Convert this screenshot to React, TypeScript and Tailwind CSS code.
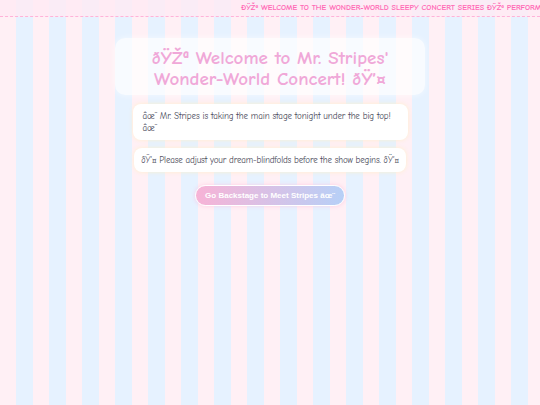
export default function App() {
  return (
    <div
      className="min-h-[405px] w-full bg-[repeating-linear-gradient(90deg,#fff0f5_0px,#fff0f5_16.5px,#e6f2ff_16.5px,#e6f2ff_33px)] font-['Comic_Sans_MS','Comic_Neue',cursive] overflow-hidden"
    >
      <div className="h-[17px] bg-[#ffeaf4]/80 border-b border-dashed border-[#ffb3d9] overflow-hidden whitespace-nowrap">
        <div className="pl-[241px] pt-[3px] text-[8px] leading-[10px] font-bold text-[#ff69b4] uppercase tracking-[0px]">
          ðŸŽª WELCOME TO THE WONDER-WORLD SLEEPY CONCERT SERIES ðŸŽª PERFORMING TONIGHT: MR. STRIPES AND THE DREAMY BAND ðŸŽª
        </div>
      </div>

      <div className="flex flex-col items-center pt-[21px]">
        <div className="w-[310px] rounded-[10px] bg-white/70 px-5 pt-[10px] pb-[5px] text-center shadow-[0_0_6px_rgba(255,255,255,0.6)]">
          <h1 className="text-[19px] leading-[21px] font-bold text-[#f0a8d8]">
            ðŸŽª Welcome to Mr. Stripes' Wonder-World Concert! ðŸ’¤
          </h1>
        </div>

        <div className="mt-[9px] w-[275px] rounded-[8px] bg-white px-[10px] py-[6px] text-[9px] leading-[12px] text-[#4a4a5a] tracking-[-0.1px] shadow-[0_0_4px_rgba(255,240,200,0.9)]">
          âœ¨ Mr. Stripes is taking the main stage tonight under the big top! âœ¨
        </div>

        <div className="mt-[8px] w-[272px] rounded-[8px] bg-white px-[6px] py-[6px] text-center text-[9px] leading-[12px] text-[#4a4a5a] tracking-[-0.15px] whitespace-nowrap shadow-[0_0_4px_rgba(255,240,200,0.9)]">
          ðŸ’¤ Please adjust your dream-blindfolds before the show begins. ðŸ’¤
        </div>

        <button className="mt-[13px] h-[21px] w-[150px] rounded-full border border-white bg-[linear-gradient(90deg,#f7b3d6,#b7d0f7)] font-['Liberation_Sans',Arial,sans-serif] text-[8px] font-bold text-white shadow-[0_0_4px_rgba(255,182,217,0.6)]">
          Go Backstage to Meet Stripes âœ¨
        </button>
      </div>
    </div>
  );
}
